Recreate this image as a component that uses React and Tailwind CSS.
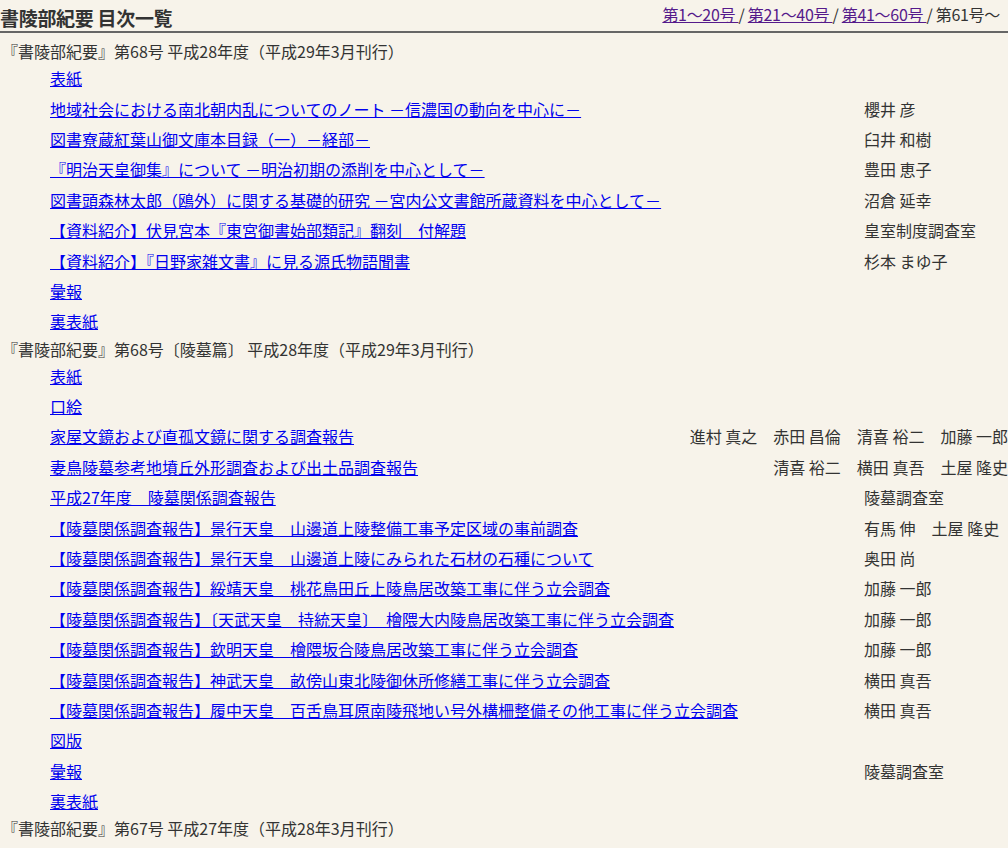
const secs = [
  { h: "『書陵部紀要』第68号 平成28年度（平成29年3月刊行）", rows: [
    ["表紙"],
    ["地域社会における南北朝内乱についてのノート －信濃国の動向を中心に－", "櫻井 彦"],
    ["図書寮蔵紅葉山御文庫本目録（一）－経部－", "臼井 和樹"],
    ["『明治天皇御集』について －明治初期の添削を中心として－", "豊田 恵子"],
    ["図書頭森林太郎（鴎外）に関する基礎的研究 －宮内公文書館所蔵資料を中心として－", "沼倉 延幸"],
    ["【資料紹介】伏見宮本『東宮御書始部類記』翻刻　付解題", "皇室制度調査室"],
    ["【資料紹介】『日野家雑文書』に見る源氏物語聞書", "杉本 まゆ子"],
    ["彙報"],
    ["裏表紙"],
  ]},
  { h: "『書陵部紀要』第68号〔陵墓篇〕 平成28年度（平成29年3月刊行）", rows: [
    ["表紙"],
    ["口絵"],
    ["家屋文鏡および直孤文鏡に関する調査報告", "進村 真之　赤田 昌倫　清喜 裕二　加藤 一郎"],
    ["妻鳥陵墓参考地墳丘外形調査および出土品調査報告", "清喜 裕二　横田 真吾　土屋 隆史"],
    ["平成27年度　陵墓関係調査報告", "陵墓調査室"],
    ["【陵墓関係調査報告】景行天皇　山邊道上陵整備工事予定区域の事前調査", "有馬 伸　土屋 隆史"],
    ["【陵墓関係調査報告】景行天皇　山邊道上陵にみられた石材の石種について", "奥田 尚"],
    ["【陵墓関係調査報告】綏靖天皇　桃花鳥田丘上陵鳥居改築工事に伴う立会調査", "加藤 一郎"],
    ["【陵墓関係調査報告】〔天武天皇　持統天皇〕　檜隈大内陵鳥居改築工事に伴う立会調査", "加藤 一郎"],
    ["【陵墓関係調査報告】欽明天皇　檜隈坂合陵鳥居改築工事に伴う立会調査", "加藤 一郎"],
    ["【陵墓関係調査報告】神武天皇　畝傍山東北陵御休所修繕工事に伴う立会調査", "横田 真吾"],
    ["【陵墓関係調査報告】履中天皇　百舌鳥耳原南陵飛地い号外構柵整備その他工事に伴う立会調査", "横田 真吾"],
    ["図版"],
    ["彙報", "陵墓調査室"],
    ["裏表紙"],
  ]},
  { h: "『書陵部紀要』第67号 平成27年度（平成28年3月刊行）", rows: [["表紙"]] },
];

export default function App() {
  return (
    <div className="h-[848px] overflow-hidden bg-[#f7f3ea] text-[#333] text-[16px]" style={{ fontFamily: '"Noto Sans CJK JP", sans-serif' }}>
      <div className="flex items-end justify-between border-b-2 border-[#666] h-[33px] pb-[1px]">
        <h1 className="text-[19px] font-bold leading-[24px] tracking-[-0.3px]">書陵部紀要 目次一覧</h1>
        <div className="pr-[8px] leading-[24px] pb-[4px] tracking-[-0.3px]">
          <a href="#" className="text-[#551a8b] underline">第1～20号 </a> / <a href="#" className="text-[#551a8b] underline">第21～40号 </a> / <a href="#" className="text-[#551a8b] underline">第41～60号 </a> / 第61号～
        </div>
      </div>
      <div className="pt-[6px]">
        {secs.map((s, i) => (
          <div key={i}>
            <div className="pl-[2px] leading-[24px]">{s.h}</div>
            {s.rows.map((r, j) => (
              <div key={j} className="flex items-center h-[30.4px] pl-[50px]">
                <a href="#" className="text-[#0000ee] underline whitespace-nowrap">{r[0]}</a>
                <div className="flex-1 flex justify-end">
                  {r[1] && <div className="min-w-[144px] whitespace-nowrap">{r[1]}</div>}
                </div>
              </div>
            ))}
          </div>
        ))}
      </div>
    </div>
  );
}
